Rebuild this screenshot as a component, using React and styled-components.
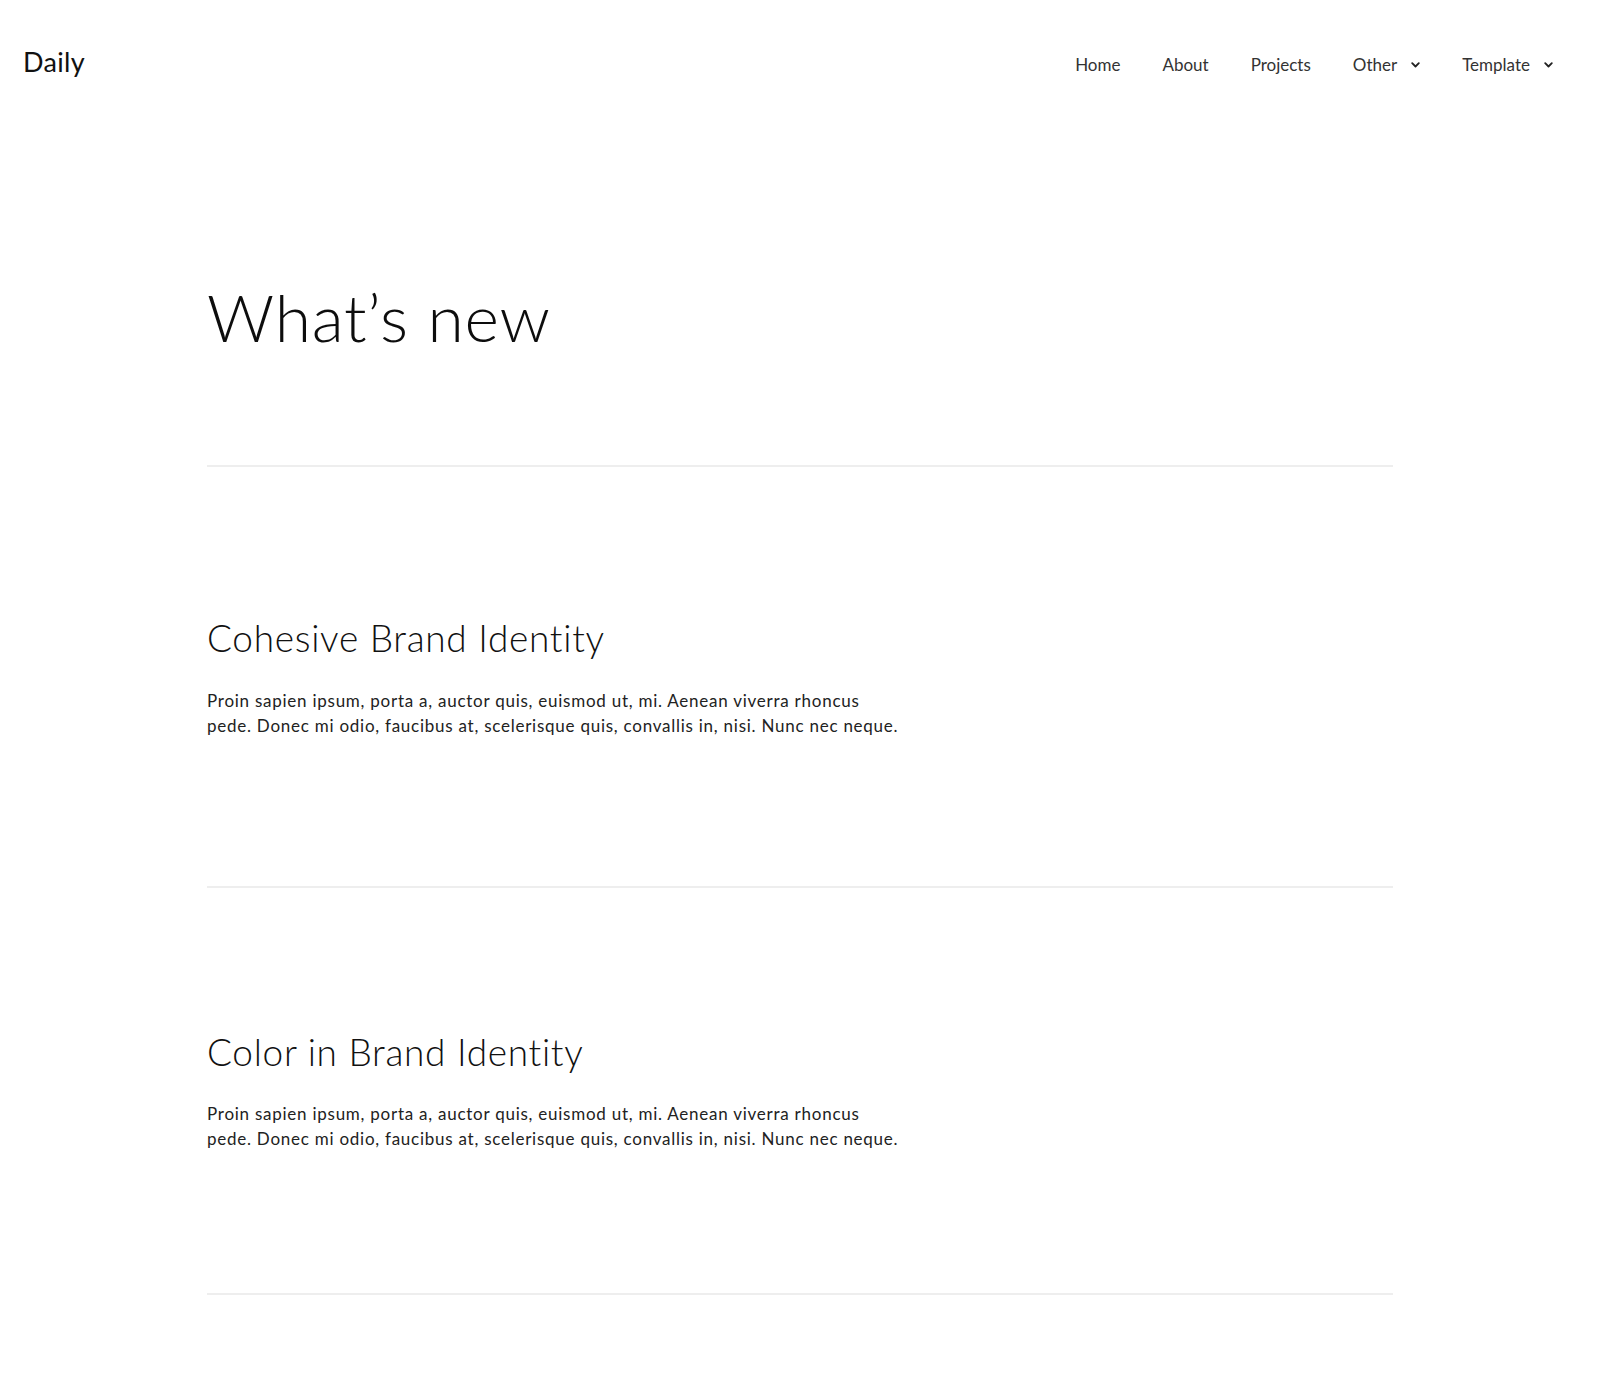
import React from "react";
import styled, { createGlobalStyle } from "styled-components";

const GlobalStyle = createGlobalStyle`
  html, body {
    margin: 0;
    padding: 0;
    background: #ffffff;
  }
  body {
    font-family: Lato, "Open Sans", sans-serif;
    color: #111;
    -webkit-font-smoothing: antialiased;
  }
`;

const posts = [
  {
    title: "Cohesive Brand Identity",
    lines: [
      "Proin sapien ipsum, porta a, auctor quis, euismod ut, mi. Aenean viverra rhoncus",
      "pede. Donec mi odio, faucibus at, scelerisque quis, convallis in, nisi. Nunc nec neque.",
    ],
    top: 149,
    bottom: 147,
  },
  {
    title: "Color in Brand Identity",
    lines: [
      "Proin sapien ipsum, porta a, auctor quis, euismod ut, mi. Aenean viverra rhoncus",
      "pede. Donec mi odio, faucibus at, scelerisque quis, convallis in, nisi. Nunc nec neque.",
    ],
    top: 142,
    bottom: 141,
  },
];

const links = [
  { label: "Home" },
  { label: "About" },
  { label: "Projects" },
  { label: "Other", dropdown: true },
  { label: "Template", dropdown: true },
];

const Chevron = () => (
  <svg width="9" height="6" viewBox="0 0 9 6" fill="none">
    <polyline
      points="1.2,1.2 4.5,4.5 7.8,1.2"
      stroke="#222"
      strokeWidth="1.8"
      strokeLinecap="round"
      strokeLinejoin="round"
    />
  </svg>
);

const App = () => {
  return (
    <>
      <GlobalStyle />
      <Header>
        <Logo href="#">Daily</Logo>
        <NavList>
          {links.map((link) => (
            <NavItem key={link.label}>
              {link.label}
              {link.dropdown && (
                <Caret>
                  <Chevron />
                </Caret>
              )}
            </NavItem>
          ))}
        </NavList>
      </Header>
      <Main>
        <Hero>
          <Title>What’s new</Title>
        </Hero>
        {posts.map((post) => (
          <Post key={post.title} $top={post.top} $bottom={post.bottom}>
            <PostTitle>{post.title}</PostTitle>
            <PostText>
              {post.lines[0]}
              <br />
              {post.lines[1]}
            </PostText>
          </Post>
        ))}
      </Main>
    </>
  );
};

export default App;

const Header = styled.header`
  display: flex;
  align-items: center;
  justify-content: space-between;
  height: 124px;
  padding: 0 47px 0 23px;
`;

const Logo = styled.a`
  font-size: 27px;
  font-weight: 400;
  color: #111;
  text-decoration: none;
  letter-spacing: 0.3px;
  margin-top: -2px;
`;

const NavList = styled.ul`
  display: flex;
  align-items: center;
  gap: 42px;
  list-style: none;
  margin: 0;
  padding: 0;
  margin-top: 5px;
`;

const NavItem = styled.li`
  display: flex;
  align-items: center;
  font-size: 17px;
  font-weight: 400;
  color: #333;
  cursor: pointer;
`;

const Caret = styled.span`
  display: inline-flex;
  margin-left: 14px;
`;

const Main = styled.main`
  width: 1186px;
  margin: 0 auto;
`;

const Hero = styled.section`
  padding: 153px 0 109px;
  border-bottom: 2px solid #eeeeee;
`;

const Title = styled.h1`
  margin: 0;
  font-size: 66px;
  line-height: 1.2;
  font-weight: 300;
  letter-spacing: 0.7px;
  color: #0d0d0d;
`;

const Post = styled.article`
  padding: ${(p) => p.$top}px 0 ${(p) => p.$bottom}px;
  border-bottom: 2px solid #eeeeee;
`;

const PostTitle = styled.h2`
  margin: 0 0 27px;
  font-size: 37px;
  line-height: 1.2;
  font-weight: 300;
  letter-spacing: 0.7px;
  color: #111;
`;

const PostText = styled.p`
  margin: 0;
  font-size: 17px;
  line-height: 25.5px;
  font-weight: 400;
  letter-spacing: 0.75px;
  color: #222;
`;
